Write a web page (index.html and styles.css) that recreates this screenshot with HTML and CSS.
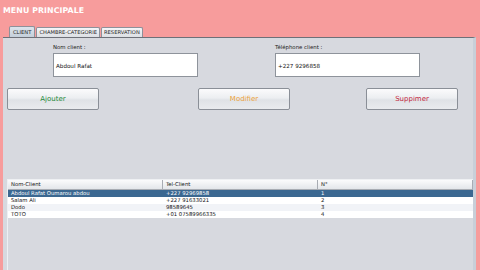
FILE: index.html
```html
<!DOCTYPE html>
<html>
<head>
<meta charset="utf-8">
<link rel="stylesheet" href="styles.css">
</head>
<body>
<div class="window">
  <div class="titlebar">MENU PRINCIPALE</div>
  <div class="tabs">
    <div class="tab active">CLIENT</div>
    <div class="tab">CHAMBRE-CATEGORIE</div>
    <div class="tab">RESERVATION</div>
  </div>
  <div class="panel">
    <div class="form">
      <div class="group">
        <div class="label">Nom client :</div>
        <div class="field">Abdoul Rafat</div>
      </div>
      <div class="group">
        <div class="label">Téléphone client :</div>
        <div class="field">+227 9296858</div>
      </div>
    </div>
    <div class="buttons">
      <button class="btn add">Ajouter</button>
      <button class="btn edit">Modifier</button>
      <button class="btn del">Suppimer</button>
    </div>
    <div class="scroll">
      <div class="row head">
        <div class="cell">Nom-Client</div>
        <div class="cell">Tel-Client</div>
        <div class="cell">N°</div>
      </div>
      <div class="row sel">
        <div class="cell">Abdoul Rafat Oumarou abdou</div>
        <div class="cell">+227 92969858</div>
        <div class="cell">1</div>
      </div>
      <div class="row">
        <div class="cell">Salam Ali</div>
        <div class="cell">+227 91633021</div>
        <div class="cell">2</div>
      </div>
      <div class="row alt">
        <div class="cell">Dodo</div>
        <div class="cell">98589645</div>
        <div class="cell">3</div>
      </div>
      <div class="row">
        <div class="cell">TOTO</div>
        <div class="cell">+01 07589966335</div>
        <div class="cell">4</div>
      </div>
    </div>
  </div>
</div>
</body>
</html>
```

FILE: styles.css
```css
* { box-sizing: border-box; }
html, body { margin: 0; padding: 0; }
body {
  width: 480px;
  height: 270px;
  overflow: hidden;
  background: #f79c9c;
  font-family: "DejaVu Sans", "Liberation Sans", sans-serif;
}
.window {
  height: 270px;
  display: flex;
  flex-direction: column;
}
.titlebar {
  height: 26px;
  padding: 6px 0 0 3px;
  color: #ffffff;
  font-weight: bold;
  font-size: 7.8px;
  letter-spacing: 0.1px;
}
.tabs {
  display: flex;
  padding-left: 9px;
  height: 11px;
  align-items: flex-end;
}
.tab {
  height: 10px;
  padding: 0 2px;
  font-size: 5.2px;
  line-height: 9px;
  color: #1e1e1e;
  background: linear-gradient(#f5f6f8, #dcdfe4);
  border: 1px solid #8d919a;
  border-bottom: none;
  border-radius: 2px 2px 0 0;
  margin-right: 1px;
}
.tab.active {
  height: 11px;
  background: linear-gradient(#dde4ec, #c4cfda);
  padding: 0 3px;
  line-height: 10px;
}
.panel {
  flex: 1;
  margin: 0 4px 0 3px;
  background: #d7d9df;
  border-top: 1px solid #6d7078;
  border-right: 3px solid #c9cfd8;
  padding: 6px 0 0 4px;
  display: flex;
  flex-direction: column;
}
.form {
  display: flex;
  padding-left: 46px;
}
.group {
  width: 222px;
  flex-shrink: 0;
}
.label {
  font-size: 5.4px;
  color: #222;
  height: 9px;
  line-height: 6px;
}
.field {
  width: 145px;
  height: 24px;
  background: #fff;
  border: 1px solid #8e939b;
  font-size: 5.6px;
  color: #111;
  padding-left: 2px;
  line-height: 24px;
}
.buttons {
  display: flex;
  margin-top: 11px;
  height: 22px;
}
.btn {
  width: 92px;
  height: 22px;
  padding: 0;
  margin: 0;
  font-family: "DejaVu Sans", "Liberation Sans", sans-serif;
  font-size: 7px;
  background: linear-gradient(#fbfbfc 0%, #eceef1 45%, #dfe2e6 55%, #e9ebee 100%);
  border: 1px solid #8a8f97;
  border-radius: 2px;
}
.btn.add { color: #1f8a3a; }
.btn.edit { color: #eba23c; margin-left: 99px; }
.btn.del { color: #c2283e; margin-left: 76px; }
.scroll {
  margin-top: 69px;
  flex: 1;
  border-left: 1px solid #eef0f3;
  border-top: 1px solid #eef0f3;
}
.row {
  display: grid;
  grid-template-columns: 155px 155px 1fr;
  height: 7px;
  font-size: 5.3px;
  line-height: 7px;
  color: #111;
  background: #ffffff;
}
.row.alt { background: #f1f3f7; }
.row .cell { padding-left: 3px; white-space: nowrap; overflow: hidden; }
.row.head {
  height: 10px;
  line-height: 9px;
  background: linear-gradient(#fbfbfc, #e3e6ea);
  border-bottom: 1px solid #a8acb3;
}
.row.head .cell { border-right: 1px solid #a8acb3; }
.row.sel {
  background: #3b6891;
  color: #ffffff;
}
```
